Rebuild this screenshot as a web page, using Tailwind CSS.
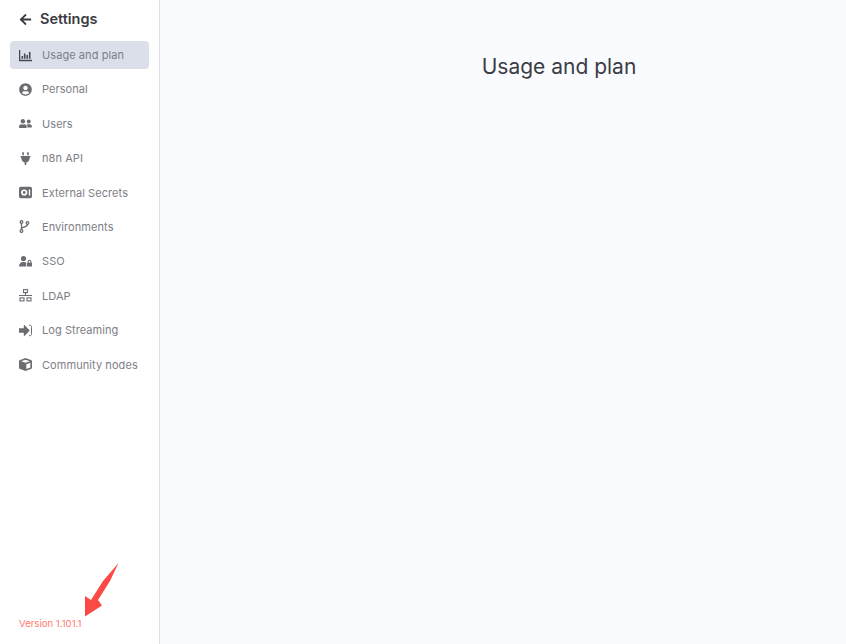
<!DOCTYPE html>
<html>
<head>
<meta charset="utf-8">
<script src="https://cdn.jsdelivr.net/npm/@tailwindcss/browser@4"></script>
</head>
<body class="m-0 font-['Inter',sans-serif]">
<div class="relative flex h-[644px] w-[846px] overflow-hidden bg-[#fafbff]">
  <aside class="flex h-full w-[160px] shrink-0 flex-col border-r border-[#dbdfe7] bg-white px-[10px]">
    <div class="flex h-[38px] items-center pl-[9px] text-[#3a3b43]">
      <svg class="mr-[8px] h-[13px] w-[13px]" viewBox="0 0 448 512" fill="currentColor"><path d="M257.500 445.100l-22.200 22.200c-9.400 9.400-24.600 9.400-33.900 0L7 273c-9.400-9.400-9.400-24.600 0-33.900L201.400 44.700c9.400-9.400 24.600-9.400 33.900 0l22.200 22.200c9.500 9.500 9.300 25-.4 34.300L136.600 216H424c13.300 0 24 10.700 24 24v32c0 13.300-10.700 24-24 24H136.600l120.500 114.800c9.800 9.300 10 24.800.4 34.300z"/></svg>
      <span class="text-[14.500px] font-semibold leading-[18px]">Settings</span>
    </div>
    <nav class="mt-[3px] flex flex-col text-[11px] leading-[16px] tracking-[0.07px] text-[#7d7e86]">
      <a class="flex h-[28px] items-center rounded-[4px] bg-[#dbdfe9] pl-[9px]">
        <svg class="mr-[10px] h-[13px] w-[13px] shrink-0 text-[#47484e]" viewBox="0 0 13 13" fill="none" stroke="currentColor"><path d="M.6 1V11.500H13" stroke-width="1.300"/><path d="M3.300 9.800V7M5.700 9.800V4.500M8.200 9.800V6M10.700 9.800V3" stroke-width="1.600"/></svg>
        <span>Usage and plan</span>
      </a>
      <a class="mt-[6.400px] flex h-[28px] items-center pl-[9px]">
        <svg class="mr-[10px] h-[13px] w-[13px] shrink-0 text-[#6b6c72]" viewBox="0 0 496 512" fill="currentColor"><path d="M248 8C111 8 0 119 0 256s111 248 248 248 248-111 248-248S385 8 248 8zm0 96c48.600 0 88 39.400 88 88s-39.400 88-88 88-88-39.400-88-88 39.400-88 88-88zm0 344c-58.700 0-111.300-26.600-146.500-68.200 18.800-35.400 55.600-59.800 98.500-59.800 2.400 0 4.800.4 7.100 1.100 13 4.200 26.600 6.900 40.900 6.900 14.300 0 28-2.700 40.900-6.900 2.300-.7 4.700-1.100 7.100-1.100 42.900 0 79.700 24.400 98.500 59.800C359.300 421.400 306.700 448 248 448z"/></svg>
        <span>Personal</span>
      </a>
      <a class="mt-[6.400px] flex h-[28px] items-center pl-[9px]">
        <svg class="mr-[10px] h-[13px] w-[13px] shrink-0 text-[#6b6c72]" viewBox="0 0 640 512" fill="currentColor"><path d="M192 256c61.900 0 112-50.100 112-112S253.900 32 192 32 80 82.100 80 144s50.100 112 112 112zm76.800 32h-8.300c-20.800 10-43.900 16-68.500 16s-47.600-6-68.500-16h-8.300C51.600 288 0 339.600 0 403.200V432c0 26.500 21.500 48 48 48h288c26.500 0 48-21.500 48-48v-28.800c0-63.600-51.600-115.200-115.200-115.200zM480 256c53 0 96-43 96-96s-43-96-96-96-96 43-96 96 43 96 96 96zm48 32h-3.800c-13.900 4.800-28.600 8-44.200 8s-30.300-3.200-44.200-8H432c-20.400 0-39.200 5.900-55.700 15.400 24.400 26.300 39.700 61.200 39.700 99.800v38.400c0 2.200-.5 4.300-.6 6.400H592c26.500 0 48-21.500 48-48 0-61.900-50.100-112-112-112z"/></svg>
        <span>Users</span>
      </a>
      <a class="mt-[6.400px] flex h-[28px] items-center pl-[9px]">
        <svg class="mr-[10px] h-[13px] w-[13px] shrink-0 text-[#6b6c72]" viewBox="0 0 384 512" fill="currentColor"><path d="M320 32c0-17.700-14.300-32-32-32s-32 14.300-32 32v96h64V32zM128 32c0-17.700-14.300-32-32-32S64 14.300 64 32v96h64V32zM16 160c-8.800 0-16 7.200-16 16v32c0 8.800 7.200 16 16 16h16v32c0 77.400 55 142 128 156.800V512h64v-99.200C297 398 352 333.400 352 256v-32h16c8.800 0 16-7.200 16-16v-32c0-8.800-7.200-16-16-16H16z"/></svg>
        <span>n8n API</span>
      </a>
      <a class="mt-[6.400px] flex h-[28px] items-center pl-[9px]">
        <svg class="mr-[10px] h-[13px] w-[13px] shrink-0 text-[#6b6c72]" viewBox="0 0 13 13"><rect x="0" y=".8" width="13" height="11.400" rx="1.800" fill="currentColor"/><circle cx="5.200" cy="6.500" r="3.100" fill="#fff"/><circle cx="5.200" cy="6.500" r="1.400" fill="currentColor"/><rect x="9.800" y="3.500" width="1.400" height="6" fill="#fff"/></svg>
        <span>External Secrets</span>
      </a>
      <a class="mt-[6.400px] flex h-[28px] items-center pl-[9px]">
        <svg class="mr-[10px] h-[13px] w-[13px] shrink-0 text-[#6b6c72]" viewBox="0 0 13 13" fill="none" stroke="currentColor" stroke-width="1.300"><circle cx="2.500" cy="2" r="1.300"/><circle cx="2.500" cy="11" r="1.300"/><circle cx="8.500" cy="3" r="1.300"/><path d="M2.500 3.300V9.700M8.500 4.300C8.500 7 5 6.500 2.500 8.500"/></svg>
        <span>Environments</span>
      </a>
      <a class="mt-[6.400px] flex h-[28px] items-center pl-[9px]">
        <svg class="mr-[10px] h-[13px] w-[13px] shrink-0 text-[#6b6c72]" viewBox="0 0 13 13" fill="currentColor"><circle cx="4.500" cy="3.600" r="2.600"/><path d="M0 11.500C0 8.500 1.800 6.900 4 6.900H5C6 6.900 6.700 7.200 7.200 7.600V11.500H0Z"/><path fill-rule="evenodd" d="M8 7.700H8.600V6.700C8.600 5.400 9.400 4.700 10.500 4.700S12.400 5.400 12.400 6.700V7.700H13V11.500H8ZM9.700 7.700H11.300V6.700C11.300 6 11 5.700 10.500 5.700S9.700 6 9.700 6.700Z"/></svg>
        <span>SSO</span>
      </a>
      <a class="mt-[6.400px] flex h-[28px] items-center pl-[9px]">
        <svg class="mr-[10px] h-[13px] w-[13px] shrink-0 text-[#6b6c72]" viewBox="0 0 13 13" fill="none" stroke="currentColor" stroke-width="1.100"><rect x="4.500" y=".6" width="4" height="3"/><rect x="1" y="8.900" width="4" height="3"/><rect x="8" y="8.900" width="4" height="3"/><path d="M6.500 3.600V6.500M0 6.500H13"/></svg>
        <span>LDAP</span>
      </a>
      <a class="mt-[6.400px] flex h-[28px] items-center pl-[9px]">
        <svg class="mr-[10px] h-[13px] w-[13px] shrink-0 text-[#6b6c72]" viewBox="0 0 13 13"><path fill="currentColor" d="M0 4.200H4.800V1.500C4.800 1 5.300 .8 5.700 1.200L10.300 5.900C10.600 6.200 10.600 6.800 10.300 7.100L5.700 11.800C5.300 12.200 4.800 12 4.800 11.500V8.800H0Z"/><path fill="none" stroke="currentColor" stroke-width="1" d="M10 1.300H10.800C12 1.300 12.500 2 12.500 3.200V9.800C12.500 11 12 11.700 10.800 11.700H10"/></svg>
        <span>Log Streaming</span>
      </a>
      <a class="mt-[6.400px] flex h-[28px] items-center pl-[9px]">
        <svg class="mr-[10px] h-[13px] w-[13px] shrink-0 text-[#6b6c72]" viewBox="0 0 512 512" fill="currentColor"><path d="M234.500 5.700c13.900-5 29.100-5 43.100 0l192 68.600C495 83.400 512 107.500 512 134.600V377.400c0 27-17 51.200-42.500 60.300l-192 68.600c-13.900 5-29.100 5-43.100 0l-192-68.600C17 428.600 0 404.500 0 377.400V134.600c0-27 17-51.200 42.500-60.300l192-68.600zM256 66L82.300 128 256 190l173.700-62L256 66zm32 368.600l160-57.100v-188L288 246.600v188z"/></svg>
        <span>Community nodes</span>
      </a>
    </nav>
    <div class="mt-auto pb-[14px] pl-[9px] text-[9.600px] leading-[13px] text-[#ff7a70]">Version 1.101.1</div>
  </aside>
  <main class="flex-1 pl-[112px]">
    <h1 class="mt-[53px] text-center text-[21px] font-normal leading-[28px] text-[#3c3c43]">Usage and plan</h1>
  </main>
  <svg class="absolute left-[84px] top-[562px] h-[56px] w-[36px]" viewBox="0 0 36 56"><polygon points="34.500,1 26,19 14,38 18,43.500 1,54.500 1,34 7,38 19,19" fill="#fa4a45"/></svg>
</div>
</body>
</html>
